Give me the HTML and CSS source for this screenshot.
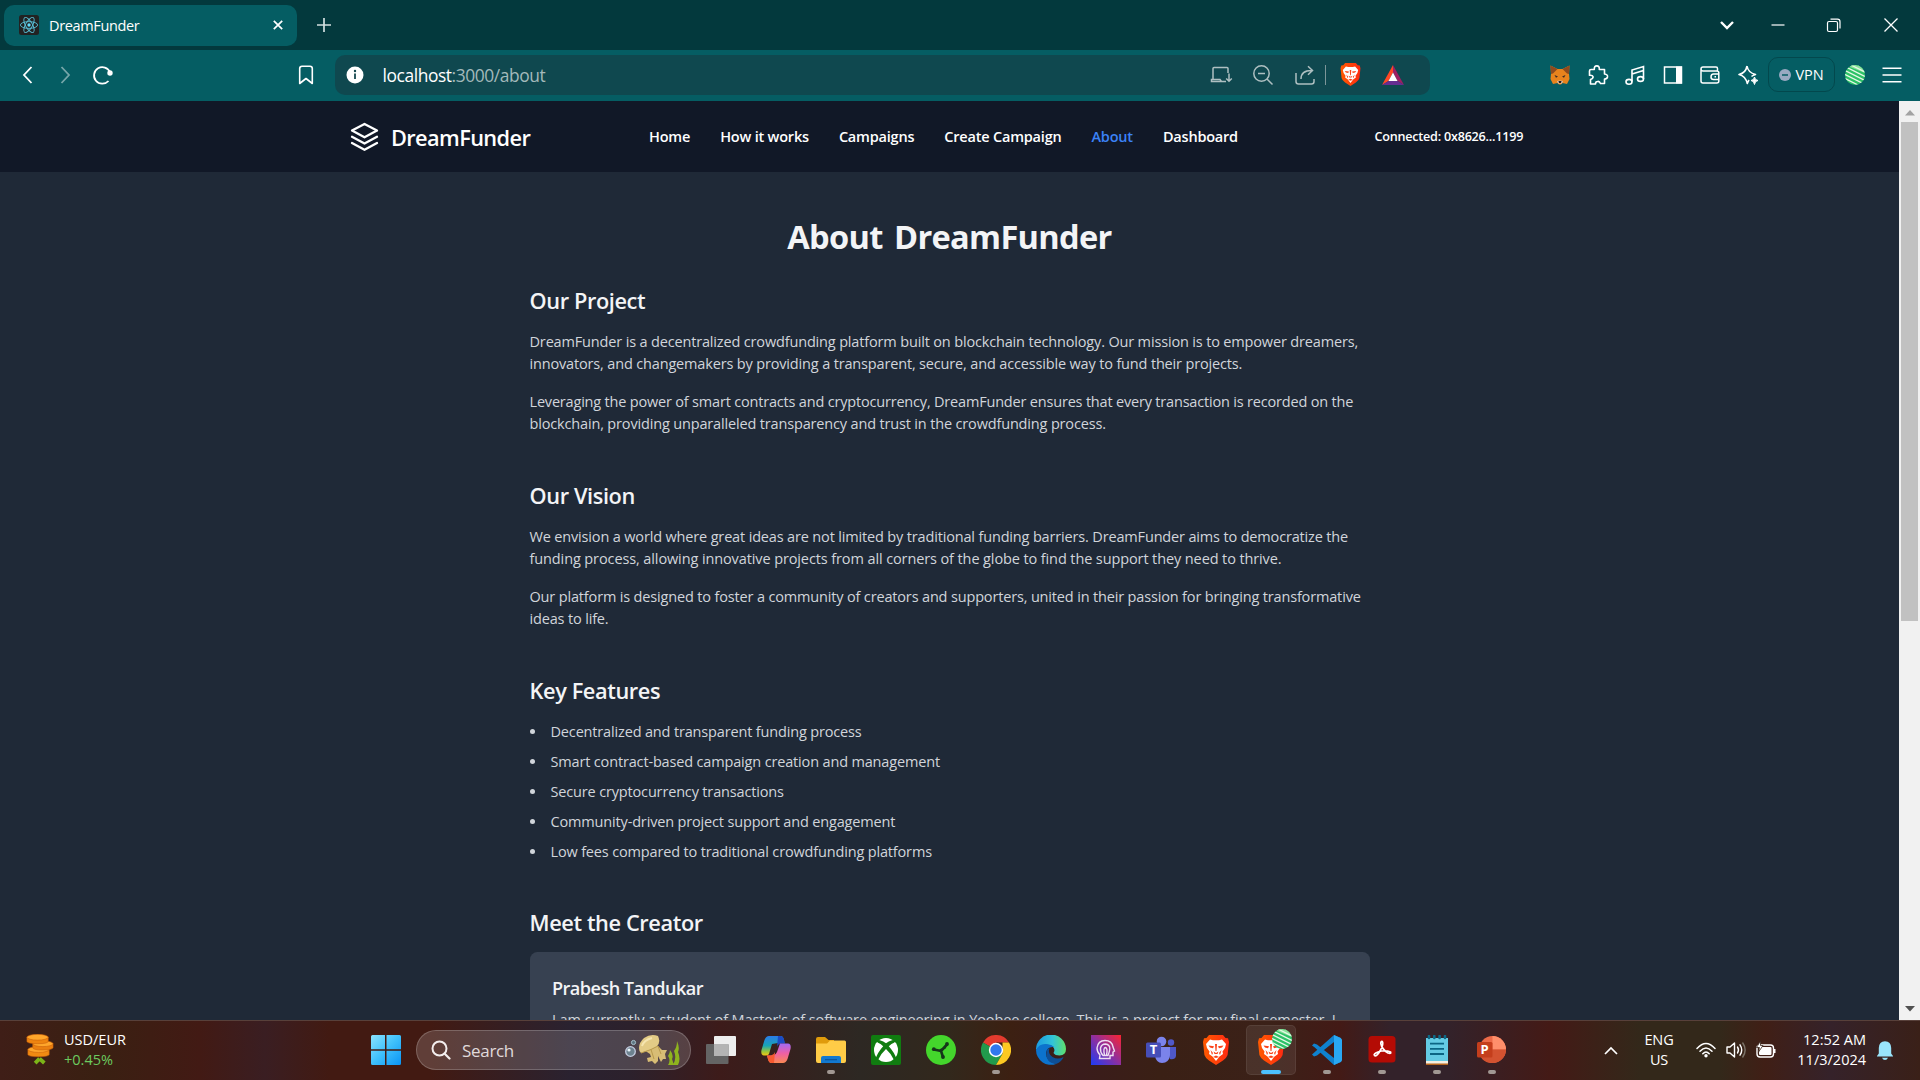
FILE: index.html
```html
<!DOCTYPE html>
<html lang="en">
<head>
<meta charset="utf-8">
<title>DreamFunder</title>
<link rel="stylesheet" href="styles.css">
</head>
<body>
<svg class="defs" aria-hidden="true">
  <defs>
    <linearGradient id="braveFill" x1="0" x2="1"><stop offset="0" stop-color="#ff5a00"/><stop offset="1" stop-color="#ff2a12"/></linearGradient>
    <linearGradient id="winFill" x1="0" y1="0" x2="1" y2="1"><stop offset="0" stop-color="#8be3ff"/><stop offset=".5" stop-color="#3fc0fb"/><stop offset="1" stop-color="#0a94f5"/></linearGradient>
    <symbol id="lion" viewBox="0 0 30 30">
      <path d="M8 0H22L24.5 3L27 3.2L28 7L26.6 20Q25.600 23 22 25.500L15 30L8 25.500Q4.400 23 3.400 20L2 7L3 3.200L5.500 3Z" fill="url(#braveFill)"/>
      <path d="M9 4.500L12 5.300H18L21 4.500L25 9L24 13L21.500 16.500L22 19L18.500 21.500L15 26L11.500 21.500L8 19L8.500 16.500L6 13L5 9Z" fill="#fff"/>
      <path d="M7.500 10.500L13 11.200L12 13.200L9 12.500ZM22.500 10.500L17 11.200L18 13.200L21 12.500ZM14 9H16L15.500 16H14.500ZM12.500 16.500L15 18L17.500 16.500L16.500 19H13.500ZM9.500 15L12 18L11 20ZM20.500 15L18 18L19 20ZM12 22L15 20.500L18 22L15 23Z" fill="#fb4218"/>
    </symbol>
    <symbol id="ball" viewBox="0 0 20 20">
      <clipPath id="ballClip"><circle cx="10" cy="10" r="10"/></clipPath>
      <g clip-path="url(#ballClip)"><rect width="20" height="20" fill="#2cc267"/><path d="M0 0L20 0L20 8Z" fill="#8be29b"/><path d="M-1 1L21 12M-1 5L21 16M-1 9L21 20M-1 13L18 22.500M2-2L22 8M8-3L22 4" stroke="#e5f8e6" stroke-width="1.200"/></g>
    </symbol>
  </defs>
</svg>

<div class="browser">
  <div class="tabstrip">
    <div class="tab">
      <svg class="favicon" viewBox="0 0 20 20"><rect width="20" height="20" rx="2.500" fill="#222"/><g fill="none" stroke="#58bfd6" stroke-width=".9"><ellipse cx="10" cy="10" rx="8.600" ry="3.400"/><ellipse cx="10" cy="10" rx="8.600" ry="3.400" transform="rotate(60 10 10)"/><ellipse cx="10" cy="10" rx="8.600" ry="3.400" transform="rotate(120 10 10)"/></g><circle cx="10" cy="10" r="1.700" fill="#61dafb"/></svg>
      <span class="tab-title">DreamFunder</span>
      <svg class="tab-close" viewBox="0 0 10 10"><path d="M.8.8L9.200 9.200M9.200.8L.8 9.200" stroke="#fff" stroke-width="1.700"/></svg>
    </div>
    <svg class="new-tab" viewBox="0 0 14 14"><path d="M7 0V14M0 7H14" stroke="#d3e0e0" stroke-width="1.700"/></svg>
    <div class="window-controls">
      <svg viewBox="0 0 24 24"><path d="M6 9L12 15L18 9" fill="none" stroke="#fff" stroke-width="2.400"/></svg>
      <svg viewBox="0 0 24 24"><path d="M5.500 12H18.500" stroke="#fff" stroke-width="1.200"/></svg>
      <svg viewBox="0 0 24 24"><g fill="none" stroke="#fff" stroke-width="1.200"><rect x="5.500" y="8.500" width="10" height="10" rx="1.500"/><path d="M8.500 6.200H15.500Q18 6.200 18 8.700V15.500"/></g></svg>
      <svg viewBox="0 0 24 24"><path d="M5.500 5.500L18.500 18.500M18.500 5.500L5.500 18.500" stroke="#fff" stroke-width="1.300"/></svg>
    </div>
  </div>

  <div class="toolbar">
    <div class="nav-buttons">
      <svg viewBox="0 0 24 24"><path d="M15.500 4L8 12L15.500 20" fill="none" stroke="#fff" stroke-width="1.800"/></svg>
      <svg class="dim" viewBox="0 0 24 24"><path d="M8.500 4L16 12L8.500 20" fill="none" stroke="#fff" stroke-width="1.800"/></svg>
      <svg viewBox="0 0 24 24"><path d="M17.500 18A8.300 8.300 0 1 1 19 9.200" fill="none" stroke="#fff" stroke-width="1.800"/><circle cx="19" cy="10" r="2.700" fill="#fff"/></svg>
    </div>
    <svg class="bookmark" viewBox="0 0 24 24"><path d="M5.700 5.500Q5.700 3.200 8 3.200H16Q18.300 3.200 18.300 5.500V20.500L12 15.500L5.700 20.500Z" fill="none" stroke="#fff" stroke-width="1.600" stroke-linejoin="round"/></svg>
    <div class="omnibox">
      <svg class="info" viewBox="0 0 18 18"><circle cx="9" cy="9" r="8.500" fill="#fff"/><path d="M9 7.500V13" stroke="#14474e" stroke-width="1.800"/><circle cx="9" cy="5" r="1.200" fill="#14474e"/></svg>
      <div class="url">localhost<span>:3000/about</span></div>
      <svg class="oi install" viewBox="0 0 24 24"><path d="M15 18.500H2.500V16.500H5M4 16V5.500Q4 4.500 5 4.500H18Q19 4.500 19 5.500V10M5 16.500H11L12.500 18.500H17" fill="none" stroke="#aebfc1" stroke-width="1.500"/><path d="M20 10.500V18M17.200 15.500L20 18.300L22.800 15.500" fill="none" stroke="#aebfc1" stroke-width="1.500"/></svg>
      <svg class="oi zoomout" viewBox="0 0 24 24"><g fill="none" stroke="#aebfc1" stroke-width="1.500"><circle cx="10.500" cy="10.500" r="7.700"/><path d="M16 16L21.500 21.500M7 10.500H14"/></g></svg>
      <svg class="oi share" viewBox="0 0 24 24"><path d="M3 10V18.500Q3 21 5.500 21H18.500Q21 21 21 18.500V16M8 16Q8 7.500 18.500 7.500M15 3.300L19.500 7.500L15 11.800" fill="none" stroke="#aebfc1" stroke-width="1.500"/></svg>
      <i class="divider"></i>
      <svg class="shield"><use href="#lion"/></svg>
      <svg class="bat" viewBox="0 0 22 20"><path d="M11 0L0 20L6.500 16L11 7.500Z" fill="#ff4724"/><path d="M11 0L22 20L15.500 16L11 7.500Z" fill="#9e1f63"/><path d="M0 20H22L15.500 16H6.500Z" fill="#662d91"/><path d="M11 7.500L15.500 16H6.500Z" fill="#fff"/></svg>
    </div>
    <div class="tools">
      <svg viewBox="0 0 24 24"><path d="M2.500 2.500L9.500 6H14.500L21.500 2.500L21 11L21.500 16L19 21L14.500 20L13 21.500H11L9.500 20L5 21L2.500 16L3 11Z" fill="#e8831d"/><path d="M2.500 2.500L9.500 6L5 10.500L3 11ZM21.500 2.500L14.500 6L19 10.500L21 11Z" fill="#8e4a1f"/><path d="M6.500 12L10 13.500L8 14.800ZM17.500 12L14 13.500L16 14.800Z" fill="#3b2a24"/><path d="M9 18L12 17.500L15 18L14 20.500H10Z" fill="#d9c4b4"/><path d="M10.500 18H13.500L13 20H11Z" fill="#241b18"/></svg>
      <svg viewBox="0 0 24 24"><path d="M5 6.500H8.300Q8 2.900 10.800 2.900Q13.600 2.900 13.300 6.500H18.500V11Q22 11.500 21.500 14Q21 16 18.500 16V20.500H14.500Q13.500 18 11.500 18.500Q9.500 18.500 9.500 21H4.500V16.500Q7.500 15.500 7 13.500Q6.500 12 3.500 12.300V8Q3.500 6.500 5 6.500Z" fill="none" stroke="#fff" stroke-width="1.600" stroke-linejoin="round"/></svg>
      <svg viewBox="0 0 24 24"><g fill="none" stroke="#fff" stroke-width="1.600"><ellipse cx="6" cy="18.800" rx="3" ry="2.400"/><ellipse cx="17.500" cy="16" rx="3" ry="2.400"/><path d="M9 18.500V7L20.500 3.500V16M9 11L20.500 7.500"/></g></svg>
      <svg viewBox="0 0 24 24"><rect x="3.500" y="4" width="17" height="16" fill="none" stroke="#fff" stroke-width="1.500"/><rect x="15" y="3.500" width="6" height="17" fill="#fff"/></svg>
      <svg viewBox="0 0 24 24"><path d="M19.500 8V5.500Q19.500 4 18 4H5Q3 4 3 6Q3 8 5 8H19Q20.800 8 20.800 9.800V18Q20.800 20 18.800 20H5Q3 20 3 18V6M21 11H15.500Q13 11 13 14Q13 16.500 15.500 16.500H21M16.500 13.800H18" fill="none" stroke="#fff" stroke-width="1.500"/></svg>
      <svg viewBox="0 0 24 24"><path d="M11 3Q12 9.500 19.500 11.500Q17 12.300 15.500 13.500M13 17Q12 18.500 11.300 20.500Q9.500 13 3 11.500Q9.800 10 11 3" fill="none" stroke="#fff" stroke-width="1.600" stroke-linejoin="round"/><path d="M18.500 14Q18.900 17.100 22 17.500Q18.900 17.900 18.500 21.500Q18.100 17.900 15 17.500Q18.100 17.100 18.500 14Z" fill="#fff" stroke="#fff"/></svg>
    </div>
    <div class="vpn"><svg viewBox="0 0 12 12"><circle cx="6" cy="6" r="6" fill="#98a9c1"/><path d="M3 6H9" stroke="#055d63" stroke-width="1.500"/></svg><span>VPN</span></div>
    <svg class="profile"><use href="#ball"/></svg>
    <svg class="menu" viewBox="0 0 20 16"><path d="M.5 1.200H19.500M.5 8H19.500M.5 14.800H19.500" stroke="#fff" stroke-width="1.500"/></svg>
  </div>

  <div class="viewport">
    <div class="page">
      <header class="site-header">
        <div class="brand">
          <svg viewBox="0 0 28 30"><g fill="none" stroke="#fff" stroke-width="2.300" stroke-linejoin="round" stroke-linecap="round"><path d="M14 2L26.500 8.600L14 15.300L1.500 8.600Z"/><path d="M1.500 14.800L14 21.500L26.500 14.800"/><path d="M1.500 21L14 27.800L26.500 21"/></g></svg>
          <span>DreamFunder</span>
        </div>
        <nav>
          <a>Home</a><a>How it works</a><a>Campaigns</a><a>Create Campaign</a><a class="current">About</a><a>Dashboard</a>
        </nav>
        <div class="wallet">Connected: 0x8626...1199</div>
      </header>
      <main>
        <h1>About DreamFunder</h1>
        <section>
          <h2>Our Project</h2>
          <p>DreamFunder is a decentralized crowdfunding platform built on blockchain technology. Our mission is to empower dreamers,<br>innovators, and changemakers by providing a transparent, secure, and accessible way to fund their projects.</p>
          <p><span class="tight">Leveraging the power of smart contracts and cryptocurrency, DreamFunder ensures that every transaction is recorded on the</span><br>blockchain, providing unparalleled transparency and trust in the crowdfunding process.</p>
        </section>
        <section>
          <h2>Our Vision</h2>
          <p>We envision a world where great ideas are not limited by traditional funding barriers. DreamFunder aims to democratize the<br><span class="loose">funding process, allowing innovative projects from all corners of the globe to find the support they need to thrive.</span></p>
          <p>Our platform is designed to foster a community of creators and supporters, united in their passion for bringing transformative<br>ideas to life.</p>
        </section>
        <section>
          <h2>Key Features</h2>
          <ul>
            <li>Decentralized and transparent funding process</li>
            <li>Smart contract-based campaign creation and management</li>
            <li>Secure cryptocurrency transactions</li>
            <li>Community-driven project support and engagement</li>
            <li>Low fees compared to traditional crowdfunding platforms</li>
          </ul>
        </section>
        <section class="creator">
          <h2>Meet the Creator</h2>
          <div class="card">
            <h3>Prabesh Tandukar</h3>
            <p class="loose">I am currently a student of Master's of software engineering in Yoobee college. This is a project for my final semester. I</p>
          </div>
        </section>
      </main>
    </div>
    <div class="scrollbar">
      <svg viewBox="0 0 10 6"><path d="M5 0L10 5.500H0Z" fill="#a3a3a3"/></svg>
      <div class="thumb"></div>
      <svg viewBox="0 0 10 6"><path d="M5 5.500L10 0H0Z" fill="#505050"/></svg>
    </div>
  </div>
</div>

<div class="taskbar">
  <div class="widget">
    <svg viewBox="0 0 30 32"><g stroke="#c8600a" stroke-width=".6"><path d="M3 16V21Q3 23.500 14 23.500Q25 23.500 25 21V16Z" fill="#f08a12"/><ellipse cx="14" cy="16" rx="11" ry="3" fill="#ffa62b"/><path d="M8 10V14Q8 16.500 18 16.500Q29 16.500 29 14V10Z" fill="#ea7f10"/><ellipse cx="18.500" cy="10" rx="10.500" ry="3" fill="#ffa62b"/><path d="M2 3V7.500Q2 10 13 10Q24 10 24 7.500V3Z" fill="#ee8410"/><ellipse cx="13" cy="3.300" rx="11" ry="3" fill="#ffa62b"/></g><path d="M15 25.500L20 30M15 25.500L10.500 30" stroke="#7cb518" stroke-width="4"/></svg>
    <div><div class="pair">USD/EUR</div><div class="change">+0.45%</div></div>
  </div>
  <svg class="start" viewBox="0 0 30 30"><path d="M1.500 0H14V14.200H0V1.500Q0 0 1.500 0ZM15.500 0H28.500Q30 0 30 1.500V14.200H15.500ZM0 15.800H14V30H1.500Q0 30 0 28.500ZM15.500 15.800H30V28.500Q30 30 28.500 30H15.500Z" fill="url(#winFill)"/></svg>
  <div class="search">
    <svg class="lens" viewBox="0 0 20 20"><circle cx="8.500" cy="8.500" r="7" fill="none" stroke="#f3eeee" stroke-width="2"/><path d="M13.500 13.500L18.500 18.500" stroke="#f3eeee" stroke-width="2.200" stroke-linecap="round"/></svg>
    <span>Search</span>
    <svg class="sea" viewBox="0 0 56 32">
      <circle cx="6.500" cy="17.500" r="4.800" fill="#6d8390" stroke="#c5cde0" stroke-width="1.300"/><circle cx="5" cy="16" r="1.600" fill="#eaf6fa"/><circle cx="9.500" cy="8.500" r="2.100" fill="#5f7783" stroke="#a5c0cb"/>
      <path d="M20 16L26 20L27 23L23 24L24 28L28 27L31 30L34 27L34 22L37 28L39 25L42 25L41 20L43 16L38 16L34 12L30 10Z" fill="#d8bd75"/>
      <path d="M15.500 17Q13.500 10 20 4Q27-1 34 2Q37 8 33 12Q25 17 17 19Z" fill="#e3cb86"/><path d="M18 12Q20 6 28 4" stroke="#f5e5b0" stroke-width="2" fill="none"/><path d="M17 19L27 15.500L34 12L37 20M27 15.500L30 25" stroke="#b99a4c" stroke-width="1" fill="none"/>
      <path d="M44 31Q47 26 44 22Q46 19 46 16Q50 21 48 25L50 31ZM49 31Q53 24 50 17Q53 13 53 7Q56 14 54 18Q57 25 54 31Z" fill="#8fb41e"/>
    </svg>
  </div>
  <div class="apps">
    <div class="app"><svg viewBox="0 0 30 30"><rect x="8" y="1" width="22" height="20" rx="1" fill="#eee"/><rect y="9" width="22.500" height="20" rx="1" fill="#646464"/><path d="M8 9H22.500V21H8Z" fill="#b4b4b4"/></svg></div>
    <div class="app"><svg viewBox="0 0 30 30">
      <linearGradient id="cpA" x1="0" y1="0" x2="0" y2="1"><stop offset="0" stop-color="#2b7be8"/><stop offset=".5" stop-color="#17a5b5"/><stop offset=".8" stop-color="#9cc63a"/><stop offset="1" stop-color="#f6c412"/></linearGradient>
      <linearGradient id="cpB" x1="0" y1="0" x2="0" y2="1"><stop offset="0" stop-color="#a06af5"/><stop offset=".5" stop-color="#ee5fa5"/><stop offset="1" stop-color="#fb8852"/></linearGradient>
      <path d="M13 1H20Q22 1 23 5L23.500 8H17L11 9L8 19Q7 20.500 5 20.500H3Q-.5 20 .5 15L3.500 5Q5 1 8 1Z" fill="url(#cpA)"/><path d="M17 1H19.500Q22 1 22.800 4L24 8.500H20Q17 8.500 16 12Z" fill="#1b4bc4"/>
      <path d="M17 28H10Q8 28 7 24L6 20.500H12Q15 20 16 17L19 8.500H27Q30.500 9 29.500 14L26.500 24Q25 28 22 28Z" fill="url(#cpB)"/><path d="M13 28H10Q8 28 7.200 25L6 20.500H10Q13 20 14 17Z" fill="#f75a31"/></svg></div>
    <div class="app open"><svg viewBox="0 0 30 30"><path d="M0 4Q0 2 2 2H9L12.500 5H18V10H0Z" fill="#e09b0b"/><path d="M0 8.500H11L14 5.500H28.500Q30 5.500 30 7V26Q30 28 28 28H2Q0 28 0 26Z" fill="#ffcc47"/><path d="M5 28V23Q5 21 7 21H23Q25 21 25 23V28Z" fill="#1279d0"/><path d="M9 24.700H21" stroke="#0b549b" stroke-width="1.200"/></svg></div>
    <div class="app"><svg viewBox="0 0 30 30"><rect width="30" height="30" rx="2" fill="#107c10"/><circle cx="15" cy="15" r="12" fill="#fff"/><path d="M5.500 6.500Q7 4.500 9 5.200Q12.500 6 15 8.300Q17.500 6 21 5.200Q23 4.500 24.500 6.500L23 7.800Q20.500 8.500 17.800 11.200Q23.500 17.500 25.500 24L23 25Q20.500 19 15 14Q9.500 19 7 25L4.500 24Q6.500 17.500 12.200 11.200Q9.500 8.500 7 7.800Z" fill="#107c10"/></svg></div>
    <div class="app"><svg viewBox="0 0 30 30"><circle cx="15" cy="15" r="15" fill="#44d62c"/><path d="M15 16L8 14.500M15 16L21 9.500M15 16L17 22M14 15.500L19 12.500" stroke="#15351a" stroke-width="2.600" stroke-linecap="round"/><circle cx="7.800" cy="14.200" r="1.900" fill="#15351a"/><circle cx="21" cy="9" r="1.900" fill="#15351a"/><circle cx="17" cy="22" r="1.900" fill="#15351a"/></svg></div>
    <div class="app open"><svg viewBox="0 0 30 30"><path d="M15 15L2 7.500A15 15 0 0 1 28 7.500H15Z" fill="#e33b2e"/><path d="M15 15L2 7.500A15 15 0 0 0 15 30L21.500 18.700Z" fill="#219a4c"/><path d="M28 7.500A15 15 0 0 1 15 30L21.500 18.700L21.500 7.500Z" fill="#fdc922"/><circle cx="15" cy="15" r="7.200" fill="#fff"/><circle cx="15" cy="15" r="5.700" fill="#3078ee"/></svg></div>
    <div class="app"><svg viewBox="0 0 30 30">
      <linearGradient id="edgeTop"><stop offset="0" stop-color="#1a9be2"/><stop offset=".55" stop-color="#32c3d8"/><stop offset="1" stop-color="#5fe06b"/></linearGradient>
      <path d="M0 15A15 15 0 0 1 30 14Q30 20 23.500 20.500Q19 20.500 17.500 18Q20 14 16 11Q8 7 0 15Z" fill="url(#edgeTop)"/><path d="M0 15Q3 8.500 10 9Q16 9.500 18 12Q11 11 10 18Q10 26 20 29A15 15 0 0 1 0 15Z" fill="#0c73cd"/><path d="M10.500 16Q9 28 20 29Q26 26.500 27.500 22Q22 25 16.500 22Q11.500 19 13.500 13Q11 14 10.500 16Z" fill="#0d4f97"/></svg></div>
    <div class="app"><svg viewBox="0 0 30 30">
      <linearGradient id="mkFill" x1="0" y1="1" x2="1" y2="0"><stop offset="0" stop-color="#1c3cf5"/><stop offset=".5" stop-color="#8d2fa0"/><stop offset="1" stop-color="#fb2430"/></linearGradient>
      <rect width="30" height="30" fill="url(#mkFill)"/><path d="M8.500 23.500L9 20Q6 17 6 13Q7 5.500 14 5.500Q21 5.500 22 12L23.500 16L22 17V20.500H19V23.500ZM12 20.500Q9 17 9.500 13Q10.500 9 14.500 9Q19 9.500 18.800 14Q18.500 17 17 20.500ZM13.500 20Q12 13 14.300 12.500Q17 13 15.500 20" fill="none" stroke="#eedff2" stroke-width="1.400"/></svg></div>
    <div class="app"><svg viewBox="0 0 30 30"><circle cx="15.500" cy="6.500" r="4.800" fill="#7b83eb"/><circle cx="25" cy="7.500" r="3.200" fill="#5059c9"/><path d="M19 12H30V21Q29 25 24 24Z" fill="#4e58c8"/><path d="M9 12H24V20Q23 28 16 28Q10 27.500 9 21Z" fill="#7b83eb"/><rect y="7.500" width="15" height="15" rx="1.500" fill="#464eb8"/><text x="7.500" y="19" class="glyph">T</text></svg></div>
    <div class="app"><svg><use href="#lion"/></svg></div>
    <div class="app active"><svg class="brave-active"><use href="#lion"/></svg><svg class="badge"><use href="#ball"/></svg></div>
    <div class="app open"><svg viewBox="0 0 30 30"><path d="M22 0L29 3V27L22 30L2.500 12.300L0 10.500L2 8.500L5 9.500L22 23V7L5 20.500L2 21.500L0 19.500Z" fill="#0f82cf"/><path d="M22 0L28.500 3Q30 4 30 5V25Q30 26.500 28.500 27L22 30Z" fill="#29a8f3"/></svg></div>
    <div class="app open"><svg viewBox="0 0 30 30"><rect x="1.500" y="1" width="27" height="26.500" rx="3.500" fill="#b40b04"/><path d="M7.500 20.500Q6 19 11 17Q18 14.500 23.500 17Q24.500 19 21 18Q15 14.500 13.800 8.500Q13.800 6 15.300 6.500Q17 9 13 16Q9.500 22 7.500 20.500Z" fill="none" stroke="#fff" stroke-width="1.700"/></svg></div>
    <div class="app open"><svg viewBox="0 0 30 30"><path d="M4 26H26V30H4Z" fill="#b4641d"/><path d="M4 24H26V28.500H4Z" fill="#f5efe2"/><path d="M4 3H26V26H4Z" fill="#64cbe4"/><path d="M8 8.700H22M8 13.800H22M8 19H22" stroke="#0b6584" stroke-width="1.800"/><path d="M7 1V3M12.300 1V3M17.600 1V3M23 1V3" stroke="#0d6987" stroke-width="2.600" stroke-linecap="round"/></svg></div>
    <div class="app open"><svg viewBox="0 0 30 30"><circle cx="15.500" cy="14.500" r="13.500" fill="#ec6a48"/><path d="M15.500 1A13.500 13.500 0 0 1 29 14.500H15.500Z" fill="#ff8f6b"/><path d="M15.500 28A13.500 13.500 0 0 0 29 14.500H2Q3 28 15.500 28Z" fill="#d35230"/><rect y="7" width="15.500" height="15.500" rx="1.500" fill="#c43e1c"/><text x="7.700" y="19" class="glyph">P</text></svg></div>
  </div>
  <div class="tray">
    <svg class="caret" viewBox="0 0 14 9"><path d="M1 8L7 2L13 8" fill="none" stroke="#fff" stroke-width="1.700"/></svg>
    <div class="lang">ENG<br>US</div>
    <svg class="wifi" viewBox="0 0 20 16"><g fill="none" stroke="#fff" stroke-width="1.500" stroke-linecap="round"><path d="M1 6.500Q10-3.500 19 6.500M4 9.300Q10 2.500 16 9.300M6.800 11.800Q10 8.200 13.200 11.800"/></g><circle cx="10" cy="13.700" r="1.700" fill="#fff"/></svg>
    <svg class="volume" viewBox="0 0 20 18"><g fill="none" stroke="#fff" stroke-width="1.400" stroke-linejoin="round" stroke-linecap="round"><path d="M1 6H4L8.500 2V16L4 12H1Z"/><path d="M11.500 6Q13.500 9 11.500 12M14 3.800Q17.500 9 14 14.200"/><path d="M16.800 2Q21.500 9 16.800 16" stroke="#7d7469"/></g></svg>
    <svg class="battery" viewBox="0 0 20 18"><rect x="1" y="4" width="16.500" height="12" rx="3" fill="none" stroke="#fff" stroke-width="1.400"/><rect x="3" y="6" width="12.500" height="8" rx="1" fill="#fff"/><path d="M18.500 8V12" stroke="#fff" stroke-width="2"/><path d="M4.500 0L.5 6.500H3.500L2.500 11L7 4.500H4.500Z" fill="#fff" stroke="#38261c" stroke-width=".8"/></svg>
    <div class="clock">12:52 AM<br>11/3/2024</div>
    <svg class="bell" viewBox="0 0 16 19"><path d="M0 15L1.800 12.500V7Q2 .5 8 .3Q14 .5 14.200 7V12.500L16 15V15.500H0ZM5 16.800H11Q10 19 8 19Q6 19 5 16.800Z" fill="#99e4fb"/></svg>
  </div>
</div>
</body>
</html>
```
FILE: styles.css
```css
* { box-sizing: border-box; }
body {
  margin: 0;
  width: 1920px;
  height: 1080px;
  overflow: hidden;
  display: flex;
  flex-direction: column;
  font-family: "Open Sans", "Noto Sans", sans-serif;
  font-size: 14.5px;
  color: #fff;
}
svg { display: block; flex: none; }
.defs { width: 0; height: 0; }

/* browser chrome */
.browser { height: 1020px; display: flex; flex-direction: column; overflow: hidden; flex: none; }
.tabstrip { height: 50px; flex: none; background: #03393d; display: flex; align-items: center; padding-left: 4px; }
.tab {
  width: 293px; height: 41px; border-radius: 10px; background: #055d63;
  display: flex; align-items: center; padding: 0 14px 0 15px;
}
.favicon { width: 20px; height: 20px; }
.tab-title { margin-left: 10px; flex: 1; letter-spacing: -.025em; }
.tab-close { width: 10px; height: 10px; }
.new-tab { width: 14px; height: 14px; margin-left: 20px; }
.window-controls { margin-left: auto; display: flex; gap: 32px; padding-right: 17px; }
.window-controls svg { width: 24px; height: 24px; }
.window-controls svg:first-child { margin-right: -5px; }
.window-controls svg:nth-child(3) { margin-right: 1px; }

.toolbar { height: 51px; flex: none; background: #055d63; display: flex; align-items: center; padding-bottom: 2px; }
.nav-buttons { display: flex; gap: 13.5px; padding-left: 15.500px; }
.nav-buttons svg { width: 24px; height: 24px; }
.nav-buttons .dim { opacity: .45; }
.bookmark { width: 24px; height: 24px; margin-left: 179.500px; }
.omnibox {
  width: 1095px; height: 40px; margin-left: 16.500px; margin-top: 1px; border-radius: 10px; background: #0f484f;
  display: flex; align-items: center; padding-left: 11px; padding-bottom: 1px;
}
.info { width: 18px; height: 18px; }
.url { margin-left: 19px; flex: 1; font-size: 17.4px; letter-spacing: -.024em; }
.url span { color: #a3b9bb; }
.oi { width: 24px; height: 24px; }
.zoomout { margin-left: 18px; }
.share { margin-left: 18px; }
.divider { width: 1px; height: 20px; background: #7d9699; margin: 0 13px 0 8px; }
.shield { width: 23px; height: 23px; }
.bat { width: 22px; height: 20px; margin: 0 26px 0 20px; }
.tools { display: flex; gap: 13.5px; margin-left: 118.500px; }
.tools svg { width: 24px; height: 24px; }
.vpn {
  width: 67px; height: 35px; margin-left: 8px; border: 1.500px solid #03484d; border-radius: 10px;
  display: flex; align-items: center; justify-content: center; gap: 5px;
}
.vpn svg { width: 12px; height: 12px; }
.vpn span { letter-spacing: -.01em; }
.profile { width: 20px; height: 20px; margin-left: 10px; }
.menu { width: 20px; height: 16px; margin-left: 17px; }

/* web page */
.viewport { flex: 1; min-height: 0; display: flex; background: #1f2937; }
.page { flex: 1; min-width: 0; overflow: hidden; letter-spacing: -.011em; }
.site-header {
  height: 71px; background: #111827; padding: 0 0 0 350px;
  display: grid; grid-template-columns: 299px 725.500px auto; justify-content: start; align-items: center;
  font-weight: 600;
}
.brand { display: flex; align-items: center; gap: 12px; font-size: 21.75px; letter-spacing: -.028em; }
.brand svg { width: 29px; height: 30px; }
.brand span { padding-top: 1px; }
nav { display: flex; gap: 30px; letter-spacing: -.014em; }
.current { color: #3b82f6; }
.wallet { font-size: 12.6px; letter-spacing: -.018em; }
main { width: 840px; margin: 0 auto; padding-top: 46px; color: #d1d5db; line-height: 22.5px; white-space: nowrap; }
h1, h2, h3, p, ul { margin: 0; }
h1 { font-size: 32.6px; line-height: 37.5px; font-weight: 700; letter-spacing: -.021em; word-spacing: 3.5px; text-align: center; margin-bottom: 30px; color: #f3f4f6; }
h2 { font-size: 21.75px; line-height: 30px; font-weight: 600; letter-spacing: -.018em; margin-bottom: 15px; color: #f3f4f6; }
section { margin-bottom: 45px; }
section > p { margin-bottom: 15px; }
.tight { letter-spacing: -.013em; }
.loose { letter-spacing: -.0075em; }
ul { padding: 0; list-style: none; display: flex; flex-direction: column; gap: 7.5px; }
li { display: flex; align-items: center; gap: 15.500px; }
li::before { content: ""; width: 5px; height: 5px; margin-left: .5px; border-radius: 50%; background: #d1d5db; }
.creator h2 { margin-bottom: 14px; }
.card { background: #374151; border-radius: 7.5px; padding: 22.5px; }
h3 { font-size: 18.1px; line-height: 26.25px; font-weight: 600; letter-spacing: -.03em; margin-bottom: 8.5px; color: #f3f4f6; }
.scrollbar { width: 21px; background: #f1f1f1; display: flex; flex-direction: column; align-items: center; padding: 9px 0 8px; }
.scrollbar svg { width: 10px; height: 6px; }
.scrollbar svg:last-child { margin-top: auto; }
.thumb { width: 17px; height: 499px; margin-top: 6px; background: #c1c1c1; }

/* taskbar */
.taskbar {
  height: 60px; flex: none; display: flex; align-items: center; border-top: 1px solid #58403a; padding-bottom: 1px;
  background: linear-gradient(90deg, #3f1e17, #3a2012 100px, #421a14 200px, #3a1e22 265px, #421a12 330px, #421a12 430px, #2a2230 570px, #2c212c 630px, #3d1b1a 720px, #2d2823 860px, #32281c 950px, #3c2012 1010px, #3a1c1c 1080px, #3a2015 1160px, #3b2118 1270px, #431a16 1340px, #33222a 1390px, #33222a 1450px, #441a16 1550px, #33281a 1640px, #33281a 1720px, #401f16 1765px, #35222a 1830px, #3a2018);
}
.widget { width: 344px; padding-left: 25px; display: flex; align-items: center; gap: 10px; line-height: 20px; }
.widget > div { margin-top: -1px; }
.widget svg { width: 29px; height: 31px; margin-top: -1px; }
.change { color: #6ccb5f; }
.start { width: 30px; height: 30px; margin-left: 26.500px; }
.search {
  width: 275px; height: 40px; margin-left: 15.500px; border-radius: 20px;
  border: 1px solid rgba(255,255,255,.2); background: rgba(255,255,255,.16);
  display: flex; align-items: center; padding: 0 10px 0 14px;
}
.lens { width: 20px; height: 20px; }
.search span { margin-left: 11px; flex: 1; font-size: 17px; letter-spacing: -.018em; color: #e0dadb; }
.sea { width: 56px; height: 32px; }
.apps { display: flex; margin-left: 5px; }
.app { position: relative; width: 50px; height: 50px; margin-right: 5.05px; padding: 10px; border-radius: 5px; }
.app svg { width: 30px; height: 30px; }
.open::after, .active::after {
  content: ""; position: absolute; left: 21px; bottom: 1px; width: 8px; height: 4px; border-radius: 2px; background: #a19893;
}
.active { background: rgba(255,255,255,.08); border: 1px solid rgba(255,255,255,.07); padding: 9px; }
.active::after { left: 14px; bottom: 0; width: 20px; background: #4cc2ff; }
.app .badge { position: absolute; right: 3px; top: 3px; width: 20px; height: 20px; }
.glyph { font-size: 13px; font-weight: 700; fill: #fff; text-anchor: middle; }
.tray { display: flex; align-items: center; margin-left: auto; padding-right: 27px; line-height: 20px; }
.caret { width: 14px; height: 9px; }
.lang { width: 32px; margin-left: 25px; text-align: center; letter-spacing: -.01em; margin-top: -1px; }
.wifi { width: 20px; height: 16px; margin-left: 21px; }
.volume { width: 20px; height: 18px; margin-left: 10px; }
.battery { width: 20px; height: 18px; margin-left: 10px; }
.clock { width: 80px; margin-left: 10px; text-align: right; margin-top: -1px; }
.bell { width: 16px; height: 19px; margin-left: 11px; }
```
